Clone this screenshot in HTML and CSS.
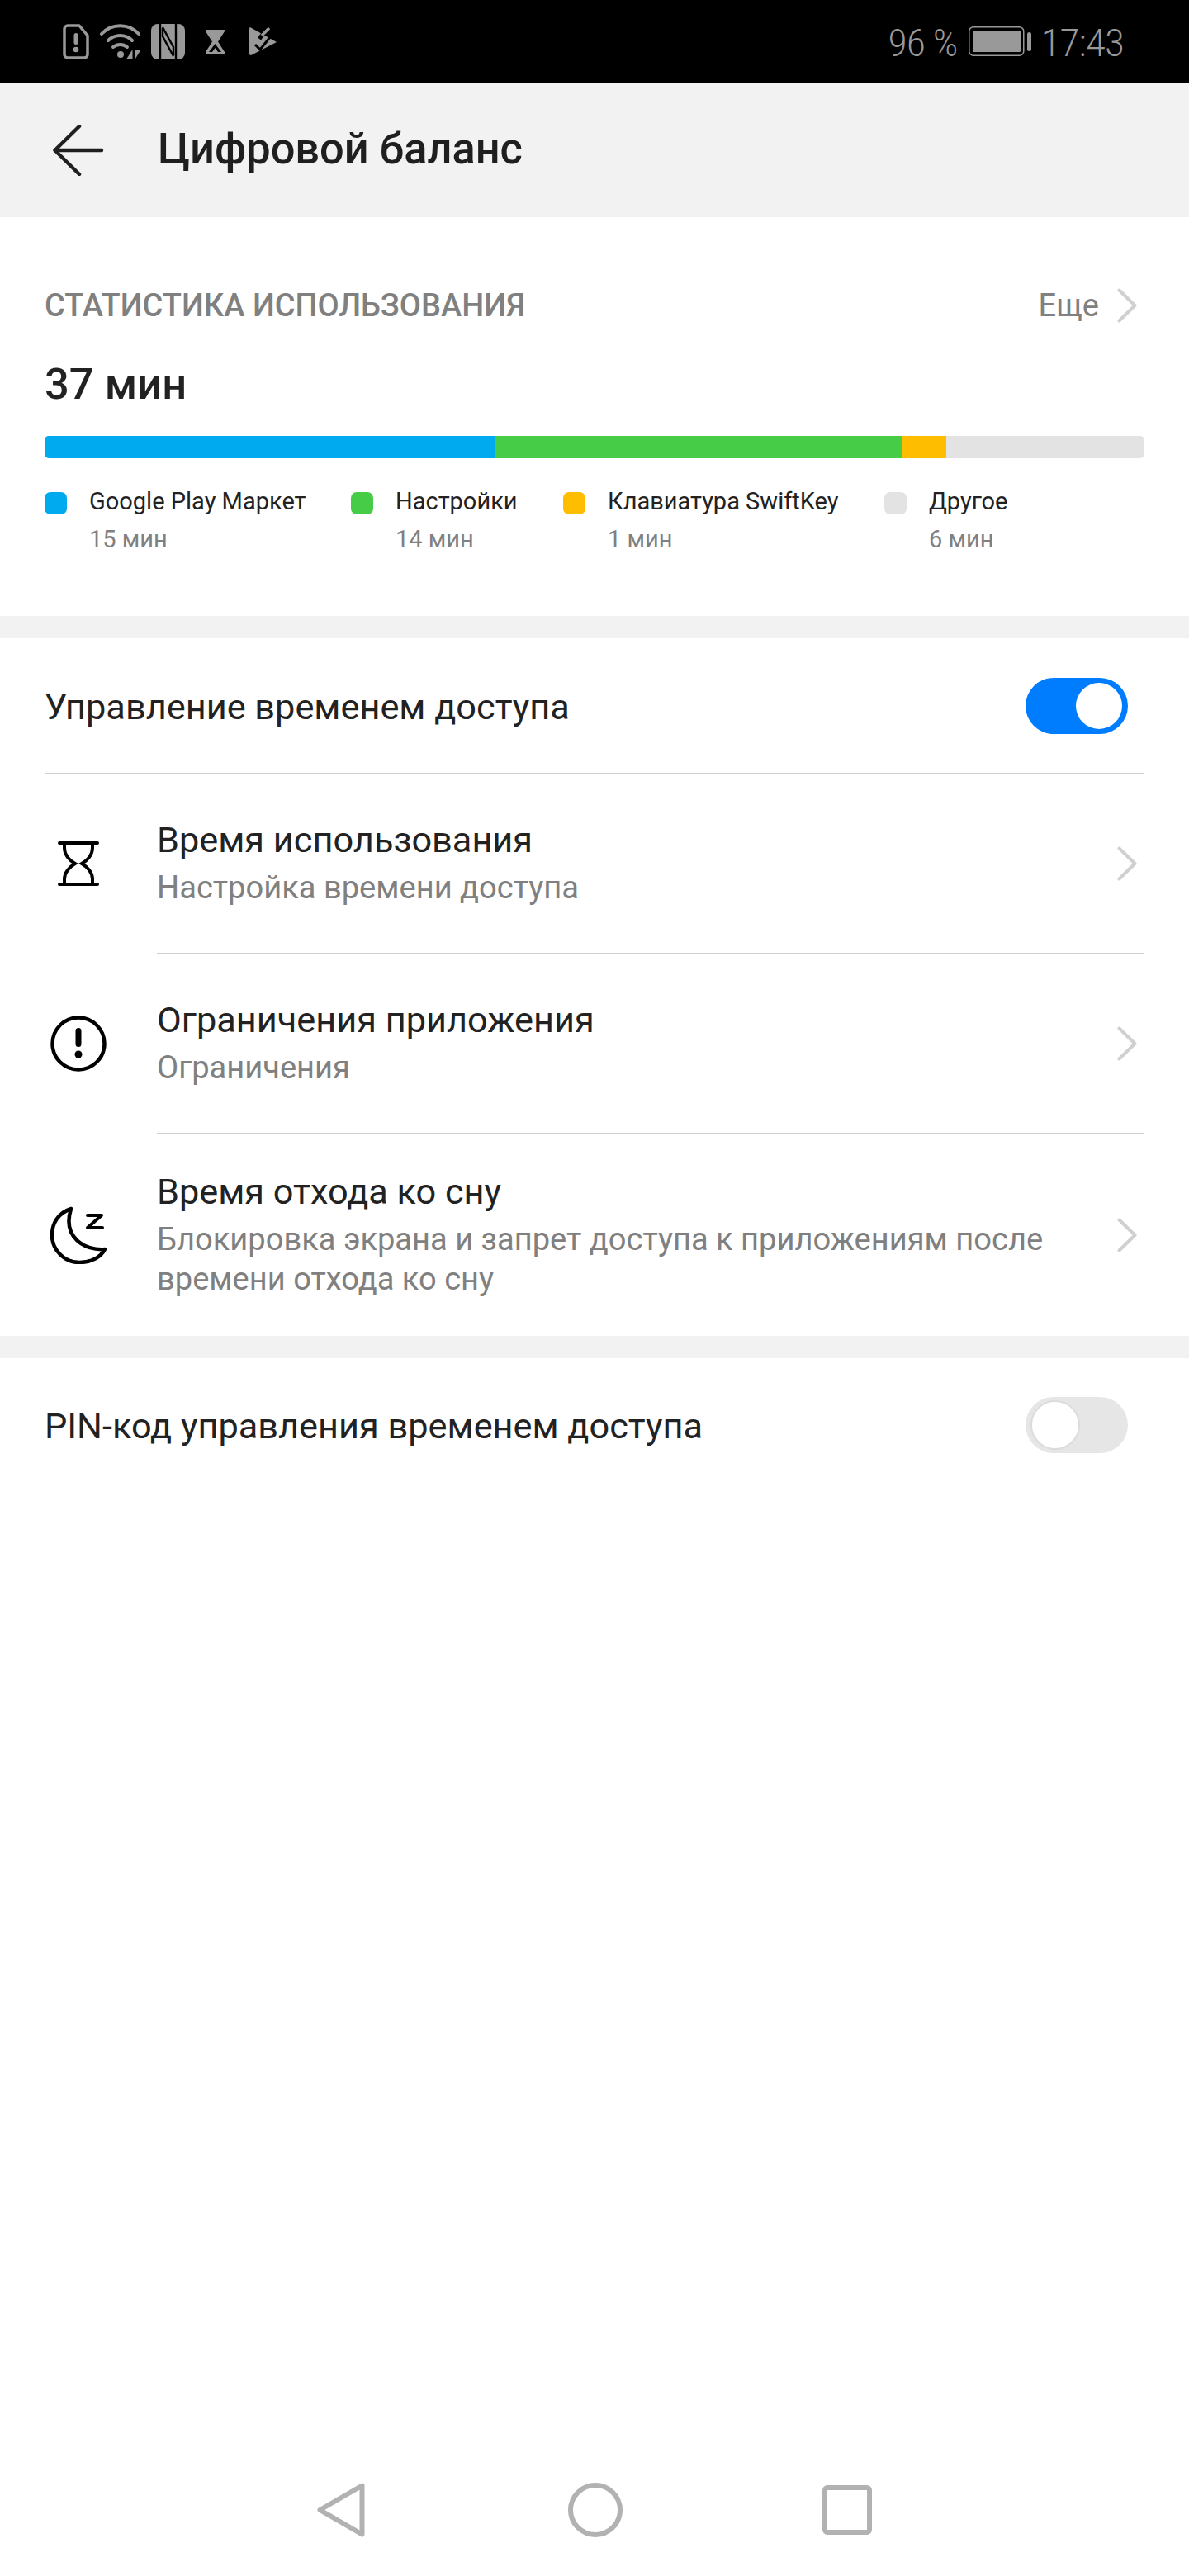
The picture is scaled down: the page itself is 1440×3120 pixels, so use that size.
FILE: index.html
```html
<!DOCTYPE html>
<html lang="ru">
<head>
    <meta charset="UTF-8">
    <meta name="viewport" content="width=device-width, initial-scale=1.0">
    <title>Цифровой баланс</title>
    <link rel="stylesheet" href="styles.css">
</head>
<body>
    <div class="screen">
        <!-- Status bar -->
        <div class="status-bar">
            <div class="status-icons">
                <svg class="ic-sim" width="32" height="43" viewBox="0 0 32 43"><path d="M6 2H20L30 14V37a4 4 0 0 1-4 4H6a4 4 0 0 1-4-4V6a4 4 0 0 1 4-4z" fill="none" stroke="#999" stroke-width="3.5" stroke-linejoin="round"/><rect x="13.5" y="11" width="5" height="14" rx="2.5" fill="#999"/><circle cx="16" cy="31" r="3.3" fill="#999"/></svg>
                <svg class="ic-wifi" width="49" height="43" viewBox="0 0 49 43"><g fill="none" stroke="#999" stroke-width="4" stroke-linecap="round"><path d="M2 12C14 -1 35 -1 47 12"/><path d="M10 20C18 12 31 12 39 20"/><path d="M16 28C21 24 28 24 33 28"/></g><circle cx="25" cy="37" r="4" fill="#999"/><path d="M39.500 31v11h-7z" fill="#999"/><path d="M43 31.500h6.500L43 42z" fill="#999"/></svg>
                <svg class="ic-nfc" width="41" height="43" viewBox="0 0 41 43"><rect x="0" y="0" width="41" height="43" rx="8" fill="#999"/><g fill="none" stroke="#000" stroke-width="2.400"><path d="M11 0V43"/><path d="M30 0V43"/><path d="M14 4L27 28V38"/><path d="M27 39L14 15V5"/></g></svg>
                <svg class="ic-glass" width="23" height="29" viewBox="0 0 23 29"><path d="M0 0H23V2L15 14.500L23 27V29H0V27L8 14.500L0 2z" fill="#999"/><path d="M11.500 17L19 27H4z" fill="#000"/><path d="M11.500 22L15 27H8z" fill="#999"/></svg>
                <svg class="ic-play" width="33" height="34" viewBox="0 0 33 34"><path d="M1 0L33 18L2 34Q0 34 0 32V2Q0 0 1 0z" fill="#999"/><path d="M12 14L26 -4" fill="none" stroke="#000" stroke-width="5"/><path d="M15 10L24 1" fill="none" stroke="#999" stroke-width="3.500"/><path d="M7 21L13 27L25 12" fill="none" stroke="#000" stroke-width="3"/></svg>
            </div>
            <div class="status-right">
                <span class="st-pct">96 %</span>
                <svg class="ic-batt" width="76" height="36" viewBox="0 0 76 36"><rect x="0.750" y="0.750" width="66" height="34.500" rx="5" fill="none" stroke="#999" stroke-width="1.500"/><rect x="5" y="5" width="58" height="26" rx="1.500" fill="#999"/><rect x="71" y="7" width="5" height="23" rx="2.500" fill="#999"/></svg>
                <span class="st-time">17:43</span>
            </div>
        </div>

        <!-- Title -->
        <div class="title-bar">
            <svg class="back" width="62" height="62" viewBox="0 0 62 62"><path d="M32 2L2.500 31L32 60M2.500 31H59" fill="none" stroke="#1f1f1f" stroke-width="4.500" stroke-linecap="round" stroke-linejoin="round"/></svg>
            <h1>Цифровой баланс</h1>
        </div>

        <!-- Usage statistics -->
        <section class="card stats">
            <div class="stats-head">
                <span class="stats-title">СТАТИСТИКА ИСПОЛЬЗОВАНИЯ</span>
                <span class="more">Еще
                    <svg class="chev" width="24" height="42" viewBox="0 0 24 42"><path d="M2.500 2.500L21.500 21L2.500 39.500" fill="none" stroke="#d0d0d0" stroke-width="4" stroke-linecap="round" stroke-linejoin="round"/></svg>
                </span>
            </div>
            <div class="total">37 мин</div>
            <div class="bar">
                <div class="seg c-blue" style="width:546px"></div>
                <div class="seg c-green" style="width:493px"></div>
                <div class="seg c-yellow" style="width:53px"></div>
                <div class="seg c-gray" style="flex:1"></div>
            </div>
            <div class="legend">
                <div class="legend-item li-1">
                    <i class="dot c-blue"></i>
                    <div><div class="legend-name">Google Play Маркет</div><div class="legend-time">15 мин</div></div>
                </div>
                <div class="legend-item li-2">
                    <i class="dot c-green"></i>
                    <div><div class="legend-name">Настройки</div><div class="legend-time">14 мин</div></div>
                </div>
                <div class="legend-item li-3">
                    <i class="dot c-yellow"></i>
                    <div><div class="legend-name">Клавиатура SwiftKey</div><div class="legend-time">1 мин</div></div>
                </div>
                <div class="legend-item">
                    <i class="dot c-gray"></i>
                    <div><div class="legend-name">Другое</div><div class="legend-time">6 мин</div></div>
                </div>
            </div>
        </section>

        <!-- Access time -->
        <section class="card access">
            <div class="toggle-row first">
                <span class="row-label">Управление временем доступа</span>
                <span class="switch on"><i></i></span>
            </div>
            <div class="item item-time">
                <div class="item-icon">
                    <svg width="50" height="54" viewBox="0 0 50 54"><path d="M2 2H48M2 52H48M8 2V8C8 16 14 23 21 27C14 31 8 38 8 46V52M42 2V8C42 16 36 23 29 27C36 31 42 38 42 46V52" fill="none" stroke="#000" stroke-width="4" stroke-linecap="round"/></svg>
                </div>
                <div class="item-body">
                    <div class="item-text">
                        <div class="item-title">Время использования</div>
                        <div class="item-sub">Настройка времени доступа</div>
                    </div>
                    <svg class="chev" width="24" height="42" viewBox="0 0 24 42"><path d="M2.500 2.500L21.500 21L2.500 39.500" fill="none" stroke="#d0d0d0" stroke-width="4" stroke-linecap="round" stroke-linejoin="round"/></svg>
                </div>
            </div>
            <div class="item item-limit">
                <div class="item-icon">
                    <svg width="68" height="68" viewBox="0 0 68 68"><circle cx="34" cy="34" r="31.500" fill="none" stroke="#000" stroke-width="4.500"/><rect x="30.500" y="15" width="7" height="23" rx="3.500"/><circle cx="34" cy="47" r="4.500"/></svg>
                </div>
                <div class="item-body">
                    <div class="item-text">
                        <div class="item-title">Ограничения приложения</div>
                        <div class="item-sub">Ограничения</div>
                    </div>
                    <svg class="chev" width="24" height="42" viewBox="0 0 24 42"><path d="M2.500 2.500L21.500 21L2.500 39.500" fill="none" stroke="#d0d0d0" stroke-width="4" stroke-linecap="round" stroke-linejoin="round"/></svg>
                </div>
            </div>
            <div class="item item-sleep">
                <div class="item-icon">
                    <svg width="68" height="70" viewBox="0 0 68 70"><path d="M25 3C10 8 2 20 2 35C2 53 17 68 35 68C49 68 61 62 66 52C42 54 14 38 25 3z" fill="none" stroke="#000" stroke-width="4.500" stroke-linejoin="round"/><path d="M45 11H62L45 26H63" fill="none" stroke="#000" stroke-width="4" stroke-linecap="round" stroke-linejoin="round"/></svg>
                </div>
                <div class="item-body">
                    <div class="item-text">
                        <div class="item-title">Время отхода ко сну</div>
                        <div class="item-sub">Блокировка экрана и запрет доступа к приложениям после времени отхода ко сну</div>
                    </div>
                    <svg class="chev" width="24" height="42" viewBox="0 0 24 42"><path d="M2.500 2.500L21.500 21L2.500 39.500" fill="none" stroke="#d0d0d0" stroke-width="4" stroke-linecap="round" stroke-linejoin="round"/></svg>
                </div>
            </div>
        </section>

        <!-- PIN -->
        <section class="card pin">
            <div class="toggle-row">
                <span class="row-label">PIN-код управления временем доступа</span>
                <span class="switch"><i></i></span>
            </div>
        </section>

        <!-- Navigation bar -->
        <div class="nav-bar">
            <svg width="58" height="66" viewBox="0 0 58 66"><path d="M54.500 3.500L3.500 33L54.500 62.500z" fill="none" stroke="#b2b2b2" stroke-width="6" stroke-linejoin="round"/></svg>
            <svg class="nav-home" width="66" height="66" viewBox="0 0 66 66"><circle cx="33" cy="33" r="30" fill="none" stroke="#b2b2b2" stroke-width="6"/></svg>
            <svg width="60" height="60" viewBox="0 0 60 60"><rect x="3" y="3" width="54" height="54" rx="3" fill="none" stroke="#b2b2b2" stroke-width="6"/></svg>
        </div>
    </div>
</body>
</html>
```
FILE: styles.css
```css
* {
    box-sizing: border-box;
}
html, body {
    margin: 0;
    padding: 0;
}
body {
    font-family: Roboto, "Noto Sans", sans-serif;
    background: #fff;
    color: #1f1f1f;
}
.screen {
    width: 1440px;
    height: 3120px;
    display: flex;
    flex-direction: column;
    background: #f2f2f2;
}

/* status bar */
.status-bar {
    height: 100px;
    background: #000;
    color: #999;
    display: flex;
    justify-content: space-between;
    align-items: center;
    padding: 0 75px 0 76px;
    flex: none;
}
.status-icons {
    display: flex;
    align-items: center;
}
.ic-wifi { margin-left: 13px; }
.ic-nfc { margin-left: 13px; }
.ic-glass { margin-left: 25px; }
.ic-play { margin-left: 30px; }
.status-right {
    display: flex;
    align-items: center;
    font-size: 46px;
    font-weight: 300;
    white-space: nowrap;
}
.st-pct,
.st-time {
    display: block;
    transform-origin: left center;
    padding-top: 3px;
}
.st-pct { width: 82px; margin-right: 15px; transform: scaleX(.87); }
.st-time { width: 104px; margin-left: 12px; transform: scaleX(.9); }

/* title */
.title-bar {
    height: 163px;
    display: flex;
    align-items: center;
    padding-left: 64px;
    flex: none;
}
.title-bar h1 {
    margin: 0 0 4px 65px;
    font-size: 52.4px;
    font-weight: 500;
}

.card {
    background: #fff;
    flex: none;
}

/* stats */
.stats {
    height: 483px;
    padding: 0 54px;
}
.stats-head {
    display: flex;
    justify-content: space-between;
    align-items: center;
    height: 62px;
    padding-top: 76px;
    box-sizing: content-box;
}
.stats-title {
    font-size: 38px;
    font-weight: 500;
    color: #808080;
}
.more {
    display: flex;
    align-items: center;
    gap: 22px;
    font-size: 38px;
    color: #808080;
    padding-right: 9px;
}
.total {
    font-size: 52.5px;
    font-weight: 500;
    color: #222;
    margin-top: 34px;
    line-height: 60px;
}
.bar {
    display: flex;
    height: 27px;
    margin-top: 33px;
    border-radius: 5px;
    overflow: hidden;
}
.seg {
    height: 100%;
}
.c-blue { background: #00aaee; }
.c-green { background: #47cc47; }
.c-yellow { background: #ffbd00; }
.c-gray { background: #e3e3e3; }

.legend {
    display: flex;
    margin-top: 41px;
}
.legend-item {
    display: flex;
}
.li-1 { width: 371px; }
.li-2 { width: 257px; }
.li-3 { width: 389px; }
.dot {
    width: 27px;
    height: 27px;
    border-radius: 7px;
    margin-right: 27px;
    flex: none;
}
.legend-name {
    font-size: 29px;
    line-height: 22px;
    color: #222;
}
.legend-time {
    font-size: 29px;
    line-height: 30px;
    margin-top: 20px;
    color: #808080;
}

/* access */
.access {
    margin-top: 27px;
    height: 845px;
    padding-left: 54px;
}
.toggle-row {
    display: flex;
    align-items: center;
    justify-content: space-between;
}
.toggle-row.first {
    height: 164px;
    margin-right: 54px;
    padding-right: 20px;
    border-bottom: 1px solid #cfcfcf;
}
.row-label {
    font-size: 43.3px;
    color: #222;
    padding-top: 3px;
}
.switch {
    width: 124px;
    height: 68px;
    border-radius: 34px;
    background: #e6e6e6;
    display: flex;
    align-items: center;
    padding: 0 6px;
}
.switch i {
    width: 60px;
    height: 60px;
    border-radius: 50%;
    background: #fff;
    border: 2px solid #dcdcdc;
}
.switch.on {
    background: #007dff;
    justify-content: flex-end;
    padding: 0 7px;
}
.switch.on i {
    width: 56px;
    height: 56px;
    border: 0;
}
.item {
    display: flex;
}
.item-icon {
    width: 136px;
    flex: none;
    display: flex;
    align-items: center;
}
.item-time .item-icon svg { margin-left: 16px; }
.item-limit .item-icon svg { margin-left: 7px; }
.item-sleep .item-icon svg { margin-left: 7px; }
.item-body {
    flex: 1;
    display: flex;
    align-items: center;
    justify-content: space-between;
    margin-right: 54px;
}
.item-time .item-body,
.item-limit .item-body {
    height: 218px;
    border-bottom: 1px solid #cfcfcf;
}
.item-sleep .item-body {
    height: 245px;
}
.item-text {
    width: 1110px;
}
.item-title {
    font-size: 43.3px;
    line-height: 52px;
    color: #222;
}
.item-sub {
    font-size: 38.1px;
    line-height: 48px;
    color: #808080;
    margin-top: 7px;
}
.item .chev {
    margin-right: 9px;
}

/* pin */
.pin {
    margin-top: 27px;
    flex: 1;
    padding: 0 74px 0 54px;
}
.pin .toggle-row {
    height: 162px;
}

/* nav */
.nav-bar {
    background: #fff;
    height: 160px;
    flex: none;
    display: flex;
    justify-content: center;
    align-items: center;
}
.nav-home {
    margin: 0 242px 0 246px;
}
```
